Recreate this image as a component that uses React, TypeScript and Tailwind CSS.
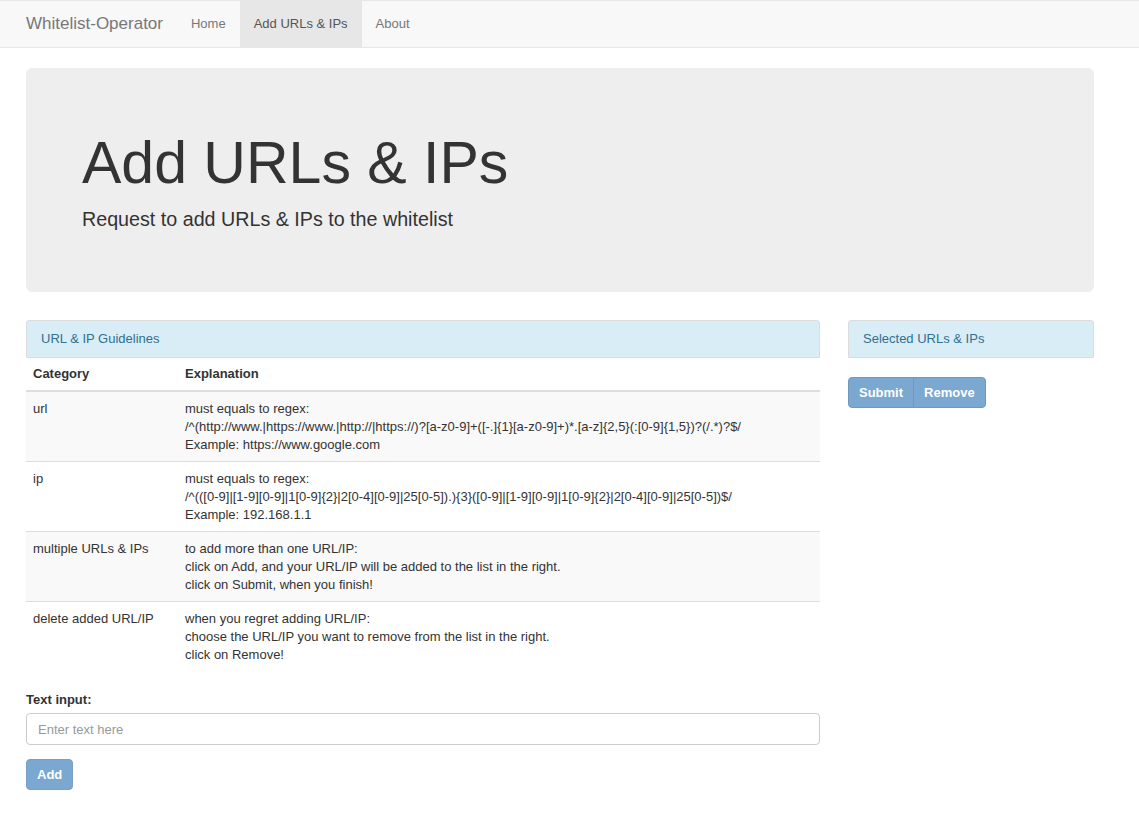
const rows = [
  {
    category: "url",
    lines: [
      "must equals to regex:",
      "/^(http://www.|https://www.|http://|https://)?[a-z0-9]+([-.]{1}[a-z0-9]+)*.[a-z]{2,5}(:[0-9]{1,5})?(/.*)?$/",
      "Example: https://www.google.com",
    ],
  },
  {
    category: "ip",
    lines: [
      "must equals to regex:",
      "/^(([0-9]|[1-9][0-9]|1[0-9]{2}|2[0-4][0-9]|25[0-5]).){3}([0-9]|[1-9][0-9]|1[0-9]{2}|2[0-4][0-9]|25[0-5])$/",
      "Example: 192.168.1.1",
    ],
  },
  {
    category: "multiple URLs & IPs",
    lines: [
      "to add more than one URL/IP:",
      "click on Add, and your URL/IP will be added to the list in the right.",
      "click on Submit, when you finish!",
    ],
  },
  {
    category: "delete added URL/IP",
    lines: [
      "when you regret adding URL/IP:",
      "choose the URL/IP you want to remove from the list in the right.",
      "click on Remove!",
    ],
  },
];

function Navbar() {
  return (
    <nav className="h-[48px] bg-[#f8f8f8] border-y border-[#e7e7e7] flex items-stretch pl-[12px]">
      <a className="px-[14px] flex items-center text-[17px] text-[#777]">
        Whitelist-Operator
      </a>
      <a className="px-[14px] flex items-center text-[13px] text-[#777]">Home</a>
      <a className="px-[14px] flex items-center text-[13px] text-[#555] bg-[#e7e7e7]">
        Add URLs &amp; IPs
      </a>
      <a className="px-[14px] flex items-center text-[13px] text-[#777]">About</a>
    </nav>
  );
}

export default function App() {
  return (
    <div
      className="min-h-screen bg-white text-[#333] text-[13px] leading-[18px]"
      style={{ fontFamily: '"Liberation Sans", Arial, sans-serif' }}
    >
      <Navbar />

      <div className="ml-[26px] w-[1068px] pb-[30px]">
        <div className="mt-[20px] bg-[#eee] rounded-[6px] px-[56px] pt-[45px] pb-[45px]">
          <h1 className="mt-[18px] mb-[9px] text-[59px] leading-[65px] font-normal text-[#333]">
            Add URLs &amp; IPs
          </h1>
          <p className="text-[19.7px] leading-[28px] font-light mb-[14px]">
            Request to add URLs &amp; IPs to the whitelist
          </p>
        </div>

        <div className="mt-[28px] flex gap-[28px] items-start">
          <div className="w-[794px]">
            <div className="h-[38px] bg-[#d9edf7] text-[#31708f] border border-[#dcdcdc] rounded-t-[3px] px-[14px] flex items-center">
              URL &amp; IP Guidelines
            </div>
            <table className="w-full border-collapse mb-[19px]">
              <thead>
                <tr>
                  <th className="w-[152px] text-left font-bold px-[7px] py-[7px] border-b-2 border-[#ddd]">
                    Category
                  </th>
                  <th className="text-left font-bold px-[7px] py-[7px] border-b-2 border-[#ddd]">
                    Explanation
                  </th>
                </tr>
              </thead>
              <tbody>
                {rows.map((r, i) => (
                  <tr key={r.category} className={i % 2 === 0 ? "bg-[#f9f9f9]" : "bg-white"}>
                    <td className="align-top px-[7px] py-[7.5px] border-t border-[#ddd]">
                      {r.category}
                    </td>
                    <td className="align-top px-[7px] py-[7.5px] border-t border-[#ddd]">
                      {r.lines.map((l) => (
                        <div key={l}>{l}</div>
                      ))}
                    </td>
                  </tr>
                ))}
              </tbody>
            </table>

            <label className="block font-bold mb-[4px] leading-[19px]">Text input:</label>
            <input
              type="text"
              placeholder="Enter text here"
              className="block w-full h-[32px] border border-[#ccc] rounded-[4px] px-[11px] text-[13px] placeholder:text-[#999] outline-none"
            />
            <button
              disabled
              className="mt-[14px] h-[31px] px-[10px] border border-[#77a0c4] bg-[#7aa8d0] text-white font-bold rounded-[4px]"
            >
              Add
            </button>
          </div>

          <div className="w-[246px]">
            <div className="h-[38px] bg-[#d9edf7] text-[#31708f] border border-[#dcdcdc] rounded-t-[3px] px-[14px] flex items-center">
              Selected URLs &amp; IPs
            </div>
            <div className="mt-[19px] flex">
              <button
                disabled
                className="h-[31px] px-[10px] border border-[#6f98bd] bg-[#7aa8d0] text-white font-bold rounded-l-[4px]"
              >
                Submit
              </button>
              <button
                disabled
                className="-ml-px h-[31px] px-[10px] border border-[#6f98bd] bg-[#7aa8d0] text-white font-bold rounded-r-[4px]"
              >
                Remove
              </button>
            </div>
          </div>
        </div>
      </div>
    </div>
  );
}
